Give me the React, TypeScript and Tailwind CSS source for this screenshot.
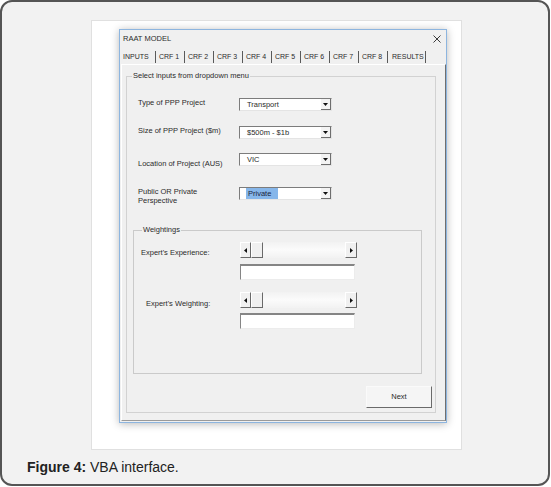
import React from "react";

const Triangle = ({ dir }: { dir: "down" | "left" | "right" }) => {
  if (dir === "down")
    return (
      <svg width="5" height="3" viewBox="0 0 5 3">
        <path d="M0 0h5L2.5 3z" fill="#111" />
      </svg>
    );
  if (dir === "left")
    return (
      <svg width="3" height="5" viewBox="0 0 3 5">
        <path d="M3 0v5L0 2.5z" fill="#111" />
      </svg>
    );
  return (
    <svg width="3" height="5" viewBox="0 0 3 5">
      <path d="M0 0v5l3-2.5z" fill="#111" />
    </svg>
  );
};

const Combo = ({ value, selected }: { value: string; selected?: boolean }) => (
  <div className="flex h-[13px] w-[93px] border border-t-[#7c7c7c] border-l-[#7c7c7c] border-r-[#e4e4e4] border-b-[#e4e4e4] bg-white">
    <div className={`flex flex-1 items-center ${selected ? "pl-[6px]" : "pl-[7px]"}`}>
      {selected ? (
        <span className="flex h-[11px] w-[32px] items-center bg-[#86b6ea] pl-[2px] text-[#1a2440]">{value}</span>
      ) : (
        <span>{value}</span>
      )}
    </div>
    <div className="flex w-[10px] items-center justify-center border-r border-b border-[#6e6e6e] bg-[#f3f3f3]">
      <Triangle dir="down" />
    </div>
  </div>
);

const ScrollBar = () => (
  <div className="flex h-[16px] w-[117px] bg-[#f7f7f7]">
    <div className="flex w-[11px] items-center justify-center border border-t-white border-l-white border-r-[#6a6a6a] border-b-[#6a6a6a] bg-[#f0f0f0]">
      <Triangle dir="left" />
    </div>
    <div className="w-[12px] border border-t-white border-l-white border-r-[#6a6a6a] border-b-[#6a6a6a] bg-[#f0f0f0]" />
    <div className="flex-1 bg-[linear-gradient(#f2f2f2,#fbfbfb,#f2f2f2)]" />
    <div className="flex w-[12px] items-center justify-center border border-t-white border-l-white border-r-[#6a6a6a] border-b-[#6a6a6a] bg-[#f0f0f0]">
      <Triangle dir="right" />
    </div>
  </div>
);

const TextBox = () => (
  <div className="h-[16px] w-[115px] border-t-2 border-l border-r border-b border-t-[#858585] border-l-[#858585] border-r-[#ececec] border-b-[#ececec] bg-white" />
);

const tabs = ["CRF 1", "CRF 2", "CRF 3", "CRF 4", "CRF 5", "CRF 6", "CRF 7", "CRF 8"];

const rows = [
  { label: ["Type of PPP Project"], value: "Transport", top: "mt-[17px]", lt: "mt-0" },
  { label: ["Size of PPP Project ($m)"], value: "$500m - $1b", top: "mt-[15px]", lt: "mt-0" },
  { label: ["Location of Project (AUS)"], value: "VIC", top: "mt-[14px]", lt: "mt-[6px]" },
  { label: ["Public OR Private", "Perspective"], value: "Private", top: "mt-[21px]", lt: "mt-0", selected: true },
];

const Dialog = () => (
  <div className="flex h-[394px] w-[328px] flex-col border border-[#8db5df] bg-[#f0f0f0] text-[7.5px] leading-[10px] text-[#2b2b2b] shadow-[0_1px_8px_rgba(0,0,0,0.28)]">
    <div className="flex h-[18px] items-center justify-between pl-[3px] pr-[5px]">
      <span>RAAT MODEL</span>
      <svg width="8" height="8" viewBox="0 0 8 8">
        <path d="M0.5 0.5l7 7M7.5 0.5l-7 7" stroke="#3a3a3a" strokeWidth="1" />
      </svg>
    </div>

    <div className="flex h-[16px] items-end pb-[1px] text-[7px]">
      <span className="flex h-[12px] w-[36px] items-center border-r border-[#5a5a5a] pl-[3px]">INPUTS</span>
      {tabs.map((t) => (
        <span key={t} className="flex h-[12px] w-[29px] items-center border-r border-[#5a5a5a] pl-[3px]">
          {t}
        </span>
      ))}
      <span className="flex h-[12px] w-[38px] items-center border-r border-[#5a5a5a] pl-[4px]">RESULTS</span>
    </div>

    <div className="ml-[1px] h-[357px] w-[325px] border border-t-white border-l-white border-r-[#6f6f6f] border-b-[#9a9a9a]">
      <fieldset className="ml-[4px] mt-[6px] h-[342px] w-[310px] border border-[#d2d2d2]">
        <legend className="ml-[5px] px-[1px] leading-[10px]">Select inputs from dropdown menu</legend>

        <div className="pl-[11px]">
          {rows.map((r) => (
            <div key={r.value} className={`flex h-[13px] items-start ${r.top}`}>
              <div className={`w-[101px] leading-[9px] ${r.lt}`}>
                {r.label.map((l) => (
                  <div key={l}>{l}</div>
                ))}
              </div>
              <Combo value={r.value} selected={r.selected} />
            </div>
          ))}
        </div>

        <fieldset className="ml-[6px] mt-[25px] h-[149px] w-[289px] border border-[#cacaca]">
          <legend className="ml-[8px] px-[1px] leading-[10px]">Weightings</legend>
          <div className="mt-[7px] flex">
            <div className="w-[106px] pl-[7px] pt-[6px] leading-[9px]">Expert's Experience:</div>
            <div className="flex flex-col gap-[6px]">
              <ScrollBar />
              <TextBox />
            </div>
          </div>
          <div className="mt-[12px] flex">
            <div className="w-[106px] pl-[12px] pt-[7px] leading-[9px]">Expert's Weighting:</div>
            <div className="flex flex-col gap-[5px]">
              <ScrollBar />
              <TextBox />
            </div>
          </div>
        </fieldset>

        <div className="mt-[12px] flex justify-end pr-[3px]">
          <button className="flex h-[22px] w-[66px] items-center justify-center border border-t-[#fafafa] border-l-[#fafafa] border-r-[#6a6a6a] border-b-[#6a6a6a] bg-[#f5f5f5]">
            Next
          </button>
        </div>
      </fieldset>
    </div>
  </div>
);

export default function App() {
  return (
    <div className="h-[487px] w-[551px] bg-white font-['Liberation_Sans',Arial,sans-serif]">
      <div className="h-[486px] w-[550px] rounded-[12px] border-2 border-[#555] bg-[#f2f2f2]">
        <div className="ml-[89px] mt-[18px] h-[430px] w-[371px] border border-[#e0e0e0] bg-white pl-[27px] pt-[8px]">
          <Dialog />
        </div>
        <p className="ml-[25px] mt-[9px] text-[14px] leading-[16px] text-[#222]">
          <b>Figure 4:</b> VBA interface.
        </p>
      </div>
    </div>
  );
}
